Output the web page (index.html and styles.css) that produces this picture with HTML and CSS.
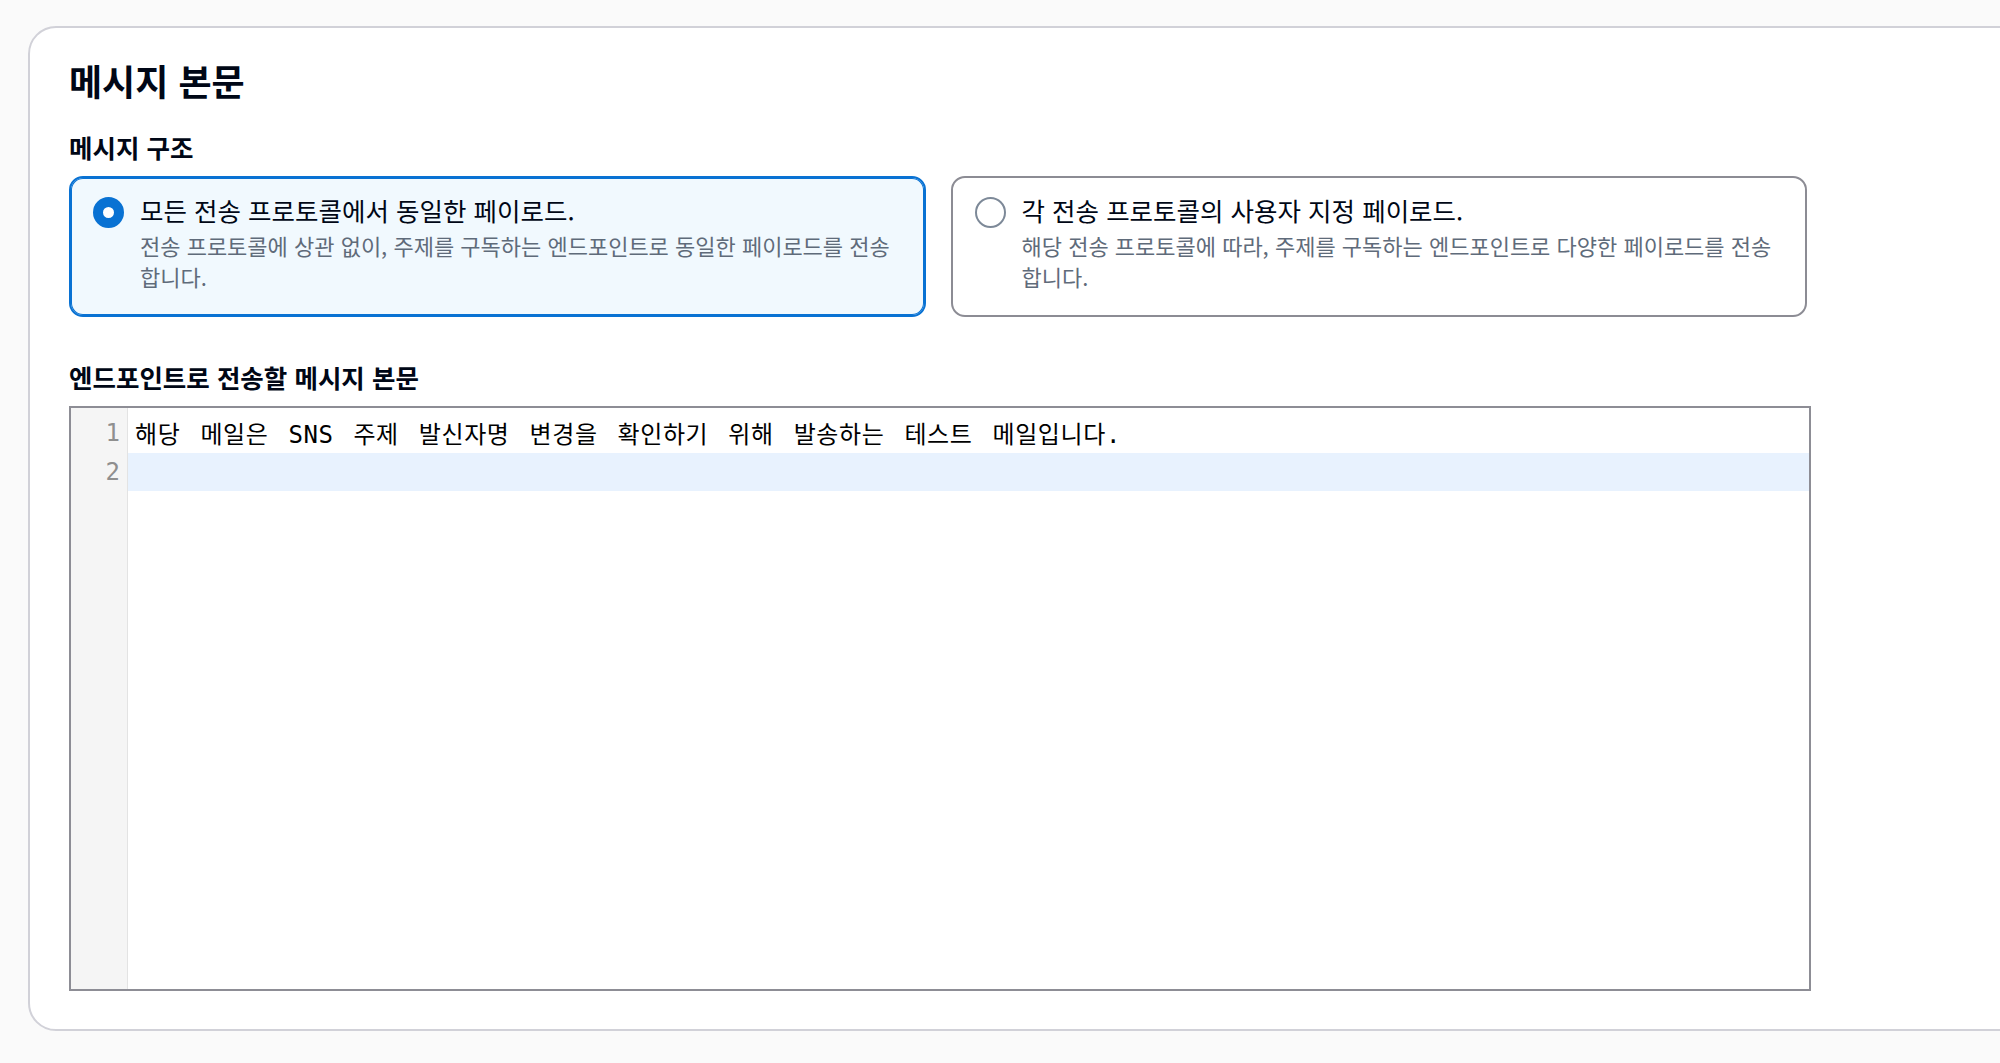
FILE: index.html
```html
<!DOCTYPE html>
<html lang="ko">
<head>
  <meta charset="UTF-8" />
  <title>메시지 본문</title>
  <link rel="stylesheet" href="styles.css">
</head>
<body>

  <section class="card">
    <h2>메시지 본문</h2>

    <!-- Message structure -->
    <div class="field-label">메시지 구조</div>
    <div class="tiles">
      <label class="tile selected">
        <span class="radio checked"></span>
        <span class="tile-text">
          <span class="tile-title">모든 전송 프로토콜에서 동일한 페이로드.</span>
          <span class="tile-desc">전송 프로토콜에 상관 없이, 주제를 구독하는 엔드포인트로 동일한 페이로드를 전송 합니다.</span>
        </span>
      </label>
      <label class="tile">
        <span class="radio"></span>
        <span class="tile-text">
          <span class="tile-title">각 전송 프로토콜의 사용자 지정 페이로드.</span>
          <span class="tile-desc">해당 전송 프로토콜에 따라, 주제를 구독하는 엔드포인트로 다양한 페이로드를 전송 합니다.</span>
        </span>
      </label>
    </div>

    <!-- Message body editor -->
    <div class="field-label body-label">엔드포인트로 전송할 메시지 본문</div>
    <div class="editor">
      <div class="gutter">
        <div class="ln">1</div>
        <div class="ln">2</div>
      </div>
      <div class="code">
        <div class="line"><span class="cjk">해당</span> <span class="cjk">메일은</span> SNS <span class="cjk">주제</span> <span class="cjk">발신자명</span> <span class="cjk">변경을</span> <span class="cjk">확인하기</span> <span class="cjk">위해</span> <span class="cjk">발송하는</span> <span class="cjk">테스트</span> <span class="cjk">메일입니다</span>.</div>
        <div class="line active"></div>
      </div>
    </div>
  </section>

</body>
</html>
```

FILE: styles.css
```css
* {
  margin: 0;
  padding: 0;
  box-sizing: border-box;
}

body {
  background: #fafafa;
  padding: 26px 0 0 28px;
  overflow: hidden;
  font-family: 'Noto Sans CJK KR', 'Noto Sans', sans-serif;
  color: #000716;
}

.card {
  width: 2040px;
  background: #fff;
  border: 2px solid #d1d1d8;
  border-radius: 28px;
  padding: 32px 39px 38px;
}

h2 {
  font-size: 36px;
  line-height: 40px;
  font-weight: 700;
  margin-bottom: 31px;
}

.field-label {
  font-size: 25.5px;
  line-height: 32px;
  font-weight: 700;
  margin-bottom: 13px;
}

.body-label {
  margin-top: 44px;
}

.tiles {
  display: grid;
  grid-template-columns: 1fr 1fr;
  gap: 25px;
  width: 1738px;
}

.tile {
  display: flex;
  gap: 16px;
  border: 2px solid #8c8c94;
  border-radius: 14px;
  padding: 15px 12px 23px 22px;
  background: #fff;
  cursor: pointer;
}

.tile.selected {
  border-color: #0972d3;
  box-shadow: inset 0 0 0 1px #0972d3;
  background: #f1f9fe;
}

.radio {
  flex: none;
  width: 31px;
  height: 31px;
  margin-top: 4px;
  border-radius: 50%;
  border: 2px solid #7d8998;
  background: #fff;
}

.radio.checked {
  border: 10px solid #0972d3;
}

.tile-text {
  display: flex;
  flex-direction: column;
  gap: 3px;
  word-break: keep-all;
}

.tile-title {
  font-size: 25.5px;
  line-height: 34px;
}

.tile-desc {
  font-size: 22px;
  line-height: 31px;
  color: #5f6b7a;
}

.editor {
  display: flex;
  width: 1742px;
  height: 585px;
  border: 2px solid #8d8d95;
  font-family: 'DejaVu Sans Mono', 'Noto Sans CJK KR', monospace;
  font-size: 24px;
  line-height: 38.5px;
}

.gutter {
  width: 57px;
  flex: none;
  background: #f5f5f5;
  border-right: 1px solid #e3e3e3;
  padding: 6px 7px 0 0;
  text-align: right;
  color: #8f8f8f;
}

.code {
  flex: 1;
  padding-top: 6px;
  color: #000;
}

.line {
  height: 38.5px;
  padding-left: 7px;
  white-space: pre;
  letter-spacing: 0.55px;
  word-spacing: 5px;
}

.line.active {
  background: #e8f2fe;
}

.cjk {
  font-family: 'Noto Sans CJK KR', sans-serif;
  letter-spacing: 0.6px;
}
```
